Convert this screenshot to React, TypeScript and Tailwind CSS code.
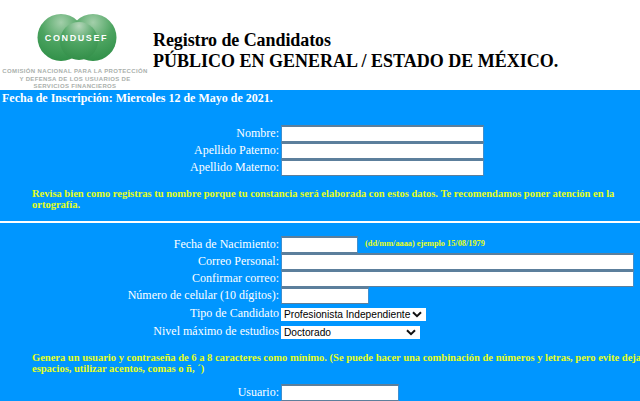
import React, { FC, ReactNode } from "react";

const serif = "font-['Liberation_Serif','Times_New_Roman',serif]";
const inputClass = "block h-[17px] border-x border-t-2 border-b border-x-[#3f8fcf] border-y-[#5c7f9c] bg-white";
const selectClass = "block appearance-none h-[13px] pl-[3px] bg-white text-[10.2px] leading-[13px] text-black font-['Liberation_Sans',Arial,sans-serif]";

const Logo: FC = () => (
  <div className="w-[150px] shrink-0 flex flex-col items-center">
    <div className="relative w-[80px] h-[47px] mt-[14px] mb-[7px] ml-[3px]">
      <svg width="80" height="47" viewBox="0 0 80 47" className="block">
        <defs>
          <radialGradient id="a" cx="50%" cy="18%" r="85%">
            <stop offset="0%" stopColor="#a3cfaa" />
            <stop offset="50%" stopColor="#4da461" />
            <stop offset="100%" stopColor="#2f8f47" />
          </radialGradient>
          <radialGradient id="b" cx="50%" cy="10%" r="90%">
            <stop offset="0%" stopColor="#b5d6ba" />
            <stop offset="50%" stopColor="#4fa563" />
            <stop offset="100%" stopColor="#338f49" />
          </radialGradient>
        </defs>
        <circle cx="24" cy="23.5" r="23.5" fill="url(#a)" />
        <circle cx="56" cy="23.5" r="23.5" fill="url(#a)" />
        <circle cx="42" cy="27" r="19" fill="url(#b)" />
      </svg>
      <span className="absolute left-0 right-0 top-[19px] text-center text-[9px] leading-[10px] font-bold tracking-[1.6px] text-white font-['Liberation_Sans',Arial,sans-serif]">
        CONDUSEF
      </span>
    </div>
    <div className="text-center text-[6px] leading-[7.5px] font-bold tracking-[0.35px] text-[#aab0ac] whitespace-nowrap font-['Liberation_Sans',Arial,sans-serif]">
      COMISIÓN NACIONAL PARA LA PROTECCIÓN
      <br />Y DEFENSA DE LOS USUARIOS DE
      <br />SERVICIOS FINANCIEROS
    </div>
  </div>
);

const Chevron: FC = () => (
  <svg width="10" height="7" viewBox="0 0 10 7" className="absolute right-[4px] top-[3px] pointer-events-none">
    <path d="M1 1.2 L5 5.2 L9 1.2" fill="none" stroke="#111" strokeWidth="2" />
  </svg>
);

interface RowProps {
  label: string;
  children: ReactNode;
  tall?: boolean;
}

const Row: FC<RowProps> = ({ label, children, tall }) => (
  <div className={`flex items-center ${tall ? "h-[18px]" : "h-[17px]"}`}>
    <div className={`w-[279px] shrink-0 text-right text-[12px] leading-[14px] text-white whitespace-nowrap ${tall ? "" : "pb-[2px]"}`}>{label}</div>
    <div className={`ml-[2px] flex items-center ${tall ? "pt-[3px]" : ""}`}>{children}</div>
  </div>
);

const Hint: FC<{ children: ReactNode; className?: string }> = ({ children, className }) => (
  <p className={`pl-[32px] text-[10.5px] leading-[11px] font-bold text-[#e6ff1a] whitespace-nowrap ${className ?? ""}`}>{children}</p>
);

export default function App() {
  return (
    <div className={`w-[640px] h-[401px] overflow-hidden bg-white ${serif}`}>
      <div className="flex h-[90px]">
        <Logo />
        <div className="ml-[3px] pt-[30px] text-[18px] leading-[21px] font-bold text-black whitespace-nowrap">
          <div className="tracking-[-0.08px]">Registro de Candidatos</div>
          <div>PÚBLICO EN GENERAL / ESTADO DE MÉXICO.</div>
        </div>
      </div>

      <div className="h-[311px] bg-[#0096ff] overflow-hidden">
        <div className="pl-[2px] pt-[1px] text-[12px] leading-[14px] font-bold text-white whitespace-nowrap">
          Fecha de Inscripción: Miercoles 12 de Mayo de 2021.
        </div>

        <div className="mt-[20px]">
          <Row label="Nombre:"><div className={`${inputClass} w-[203px]`} /></Row>
          <Row label="Apellido Paterno:"><div className={`${inputClass} w-[203px]`} /></Row>
          <Row label="Apellido Materno:"><div className={`${inputClass} w-[203px]`} /></Row>
        </div>

        <Hint className="mt-[12px]">
          Revisa bien como registras tu nombre porque tu constancia será elaborada con estos datos. Te recomendamos poner atención en la
          <br />ortografía.
        </Hint>

        <div className="mt-[11px] h-[2px] bg-white" />

        <div className="mt-[13px]">
          <Row label="Fecha de Nacimiento:">
            <div className={`${inputClass} w-[77px]`} />
            <span className="ml-[7px] text-[8.3px] font-bold text-[#e6ff1a] whitespace-nowrap">(dd/mm/aaaa) ejemplo 15/08/1979</span>
          </Row>
          <Row label="Correo Personal:"><div className={`${inputClass} w-[353px]`} /></Row>
          <Row label="Confirmar correo:"><div className={`${inputClass} w-[353px]`} /></Row>
          <Row label="Número de celular (10 dígitos):"><div className={`${inputClass} w-[88px]`} /></Row>
          <Row label="Tipo de Candidato" tall>
            <div className="relative">
              <select className={`${selectClass} w-[145px]`} defaultValue="p">
                <option value="p">Profesionista Independiente</option>
              </select>
              <Chevron />
            </div>
          </Row>
          <Row label="Nivel máximo de estudios" tall>
            <div className="relative">
              <select className={`${selectClass} w-[139px]`} defaultValue="d">
                <option value="d">Doctorado</option>
              </select>
              <Chevron />
            </div>
          </Row>
        </div>

        <Hint className="mt-[12px]">
          Genera un usuario y contraseña de 6 a 8 caracteres como mínimo. (Se puede hacer una combinación de números y letras, pero evite dejar
          <br />espacios, utilizar acentos, comas o ñ, ´)
        </Hint>

        <div className="mt-[10px]">
          <Row label="Usuario:"><div className={`${inputClass} w-[118px]`} /></Row>
        </div>
      </div>
    </div>
  );
}
